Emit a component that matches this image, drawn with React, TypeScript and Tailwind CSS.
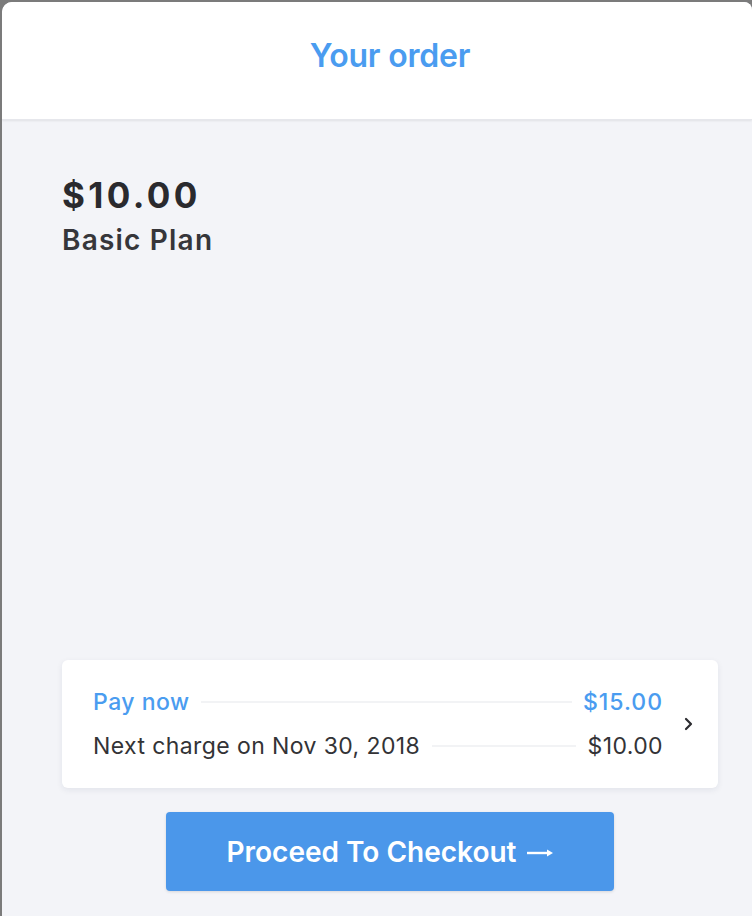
import React from "react";

export default function App() {
  const font = { fontFamily: "Inter, 'Liberation Sans', sans-serif" };
  return (
    <div className="h-[916px] w-[752px] bg-[#7b7b7b] pt-[2px] pl-[2px] overflow-hidden" style={font}>
      <div className="flex h-full flex-col overflow-hidden rounded-tl-[10px] rounded-tr-[8px] bg-[#f3f4f8]">
        <div className="relative z-10 flex h-[118px] shrink-0 items-center justify-center border-b border-[#e6e7ec] bg-white pl-[26px] pb-[10px] shadow-[0_1px_2px_rgba(0,0,0,0.08)]">
          <h1 className="text-[32px] font-semibold tracking-[-0.2px] text-[#4a9cf0]">Your order</h1>
        </div>
        <div className="flex flex-1 flex-col pl-[60px] pr-[34px] pt-[55px] pb-[25px]">
          <div className="text-[35px] font-bold leading-[40px] tracking-[3.4px] text-[#2a2a2e]">$10.00</div>
          <div className="mt-[8px] text-[28px] font-semibold leading-[34px] tracking-[1.2px] text-[#36363a]">Basic Plan</div>

          <div className="mt-auto flex h-[128px] items-center rounded-[6px] bg-white pl-[31px] pr-[23px] shadow-[0_2px_6px_rgba(30,40,80,0.08)]">
            <div className="flex flex-1 flex-col gap-[16px]">
              <div className="flex items-center text-[23px] font-medium leading-[28px] tracking-[0.5px] text-[#4a9cf0]">
                <span>Pay now</span>
                <span className="mx-[11px] h-[2px] flex-1 bg-[#f2f3f5]" />
                <span className="tracking-[1px]">$15.00</span>
              </div>
              <div className="flex items-center text-[23px] leading-[28px] tracking-[0.4px] text-[#333336]">
                <span>Next charge on Nov 30, 2018</span>
                <span className="mx-[12px] h-[2px] flex-1 bg-[#f2f3f5]" />
                <span>$10.00</span>
              </div>
            </div>
            <svg className="ml-[20px] h-[16px] w-[12px]" viewBox="0 0 12 16" fill="none">
              <path d="M3 3l5 5-5 5" stroke="#2c2c30" strokeWidth="2.2" strokeLinecap="round" strokeLinejoin="round" />
            </svg>
          </div>

          <button className="mx-auto mt-[24px] flex h-[79px] w-[448px] items-center justify-center rounded-[4px] bg-[#4b97ea] text-[28px] font-semibold text-white shadow-[0_1px_3px_rgba(0,0,0,0.12)]">
            <span>Proceed To Checkout</span>
            <svg className="ml-[9px] mt-[3px] h-[10px] w-[28px]" viewBox="0 0 28 10" fill="none">
              <path d="M1 5h22" stroke="white" strokeWidth="2.4" />
              <path d="M21 1.5L27 5l-6 3.5z" fill="white" />
            </svg>
          </button>
        </div>
      </div>
    </div>
  );
}
